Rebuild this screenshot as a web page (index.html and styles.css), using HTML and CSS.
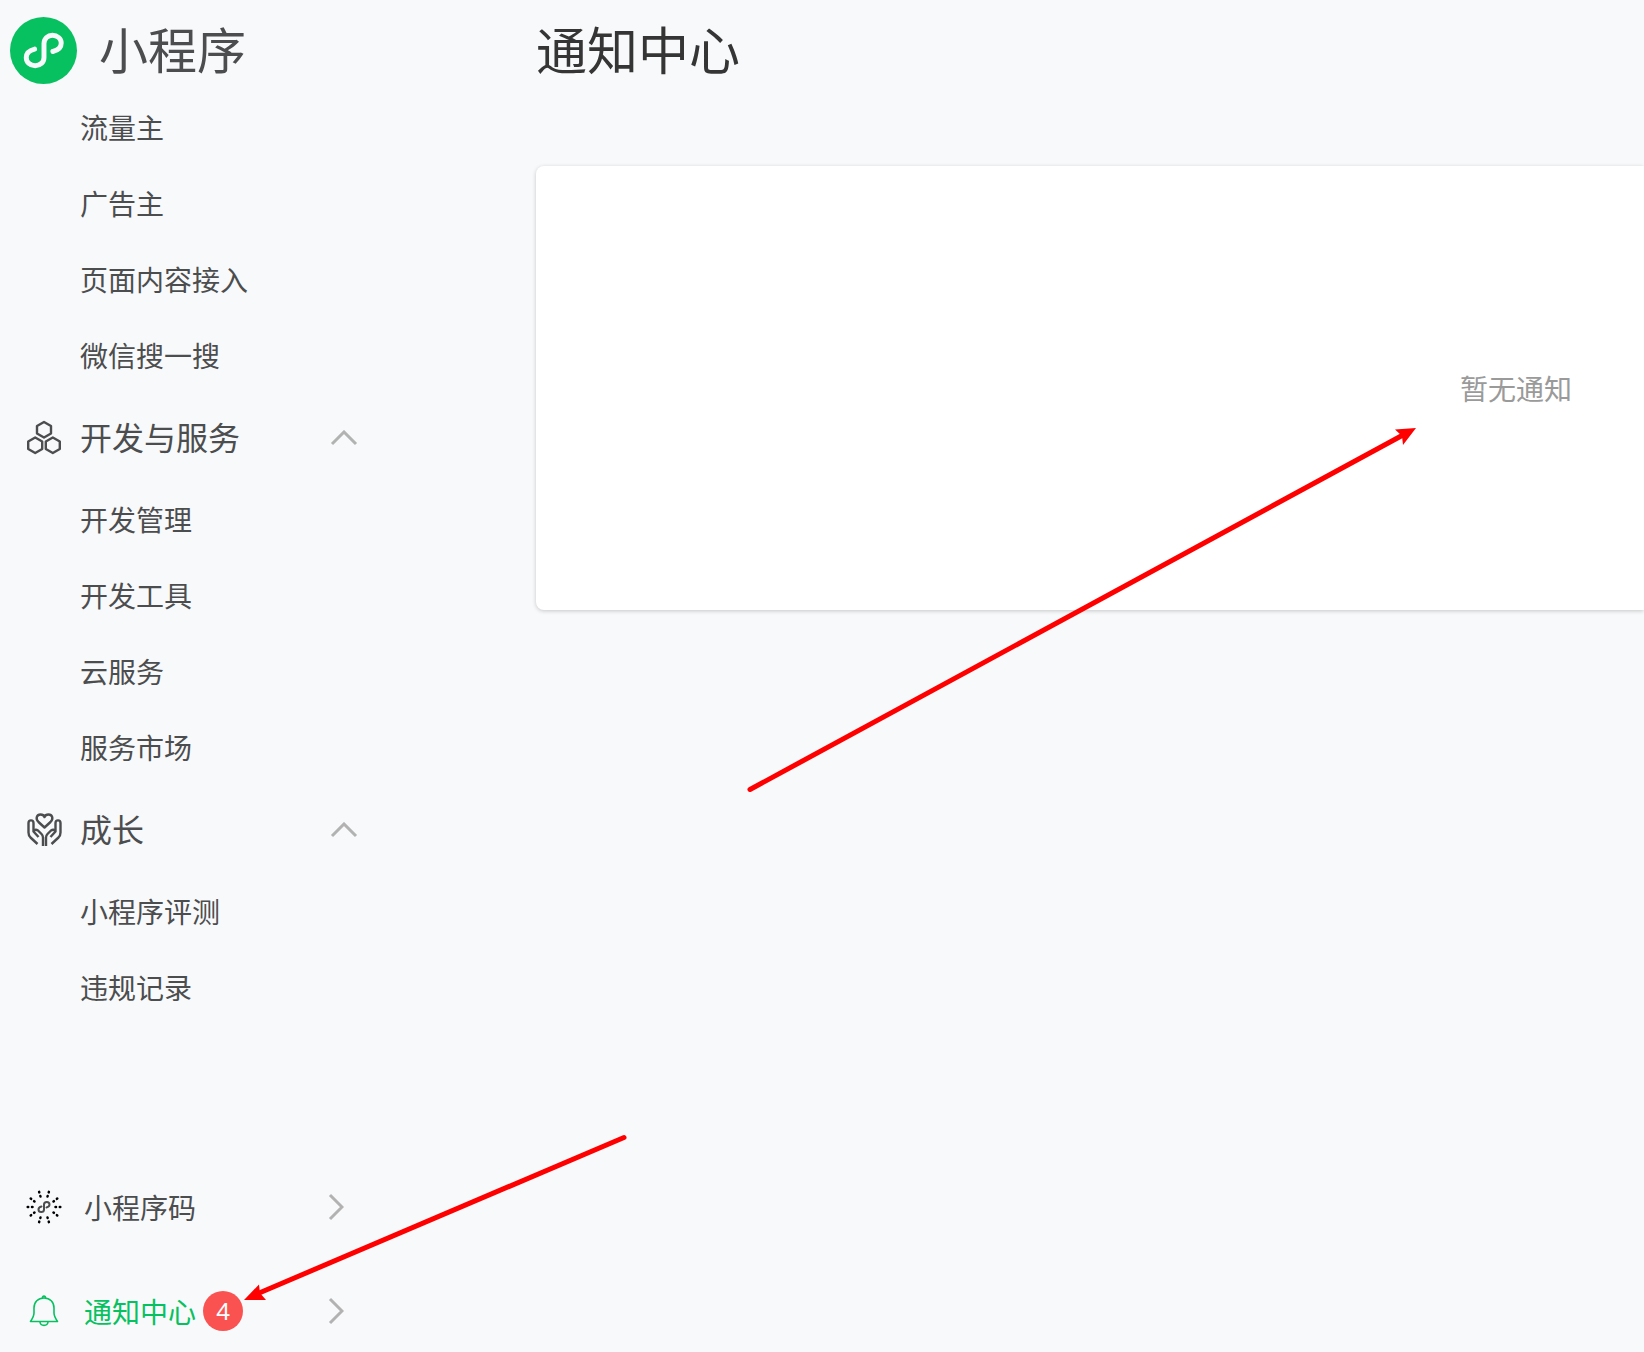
FILE: index.html
```html
<!DOCTYPE html>
<html lang="zh-CN">
<head>
    <meta charset="utf-8">
    <title>小程序 - 通知中心</title>
    <link rel="stylesheet" href="styles.css">
</head>
<body>
    <div class="layout">
        <aside class="sidebar">
            <a class="brand" href="#">
                <svg class="brand-logo" viewBox="0 0 68 68" aria-hidden="true">
                    <circle cx="34" cy="34" r="34" fill="#07c160"/>
                    <path d="M25 32.500C19 34 16.500 37 16.500 41C16.500 46 20.500 49.500 25.500 49.500C30.500 49.500 34.500 46 34.500 41V27C34.500 22 38.500 18.500 43 18.500C48 18.500 52 22 52 26.500C52 31 48.500 34 43.500 35" fill="none" stroke="#f8f9fb" stroke-width="5" stroke-linecap="round"/>
                </svg>
                <span class="brand-name">小程序</span>
            </a>

            <nav class="menu">
                <ul class="menu-list">
                    <li><a class="menu-item" href="#">流量主</a></li>
                    <li><a class="menu-item" href="#">广告主</a></li>
                    <li><a class="menu-item" href="#">页面内容接入</a></li>
                    <li><a class="menu-item" href="#">微信搜一搜</a></li>
                </ul>

                <button class="menu-group" type="button" aria-expanded="true">
                    <svg class="menu-icon" viewBox="0 0 36 36" aria-hidden="true">
                        <g fill="none" stroke="#4c4d4e" stroke-width="2.4" stroke-linejoin="round">
                            <path d="M18 2L25 6V13.500L18 17.500L11 13.500V6Z"/>
                            <path d="M9.200 17.500L16.200 21.500V29L9.200 33L2.200 29V21.500Z"/>
                            <path d="M26.800 17.500L33.800 21.500V29L26.800 33L19.800 29V21.500Z"/>
                        </g>
                    </svg>
                    <span class="menu-group-name">开发与服务</span>
                    <svg class="arrow-up" viewBox="0 0 28 16" aria-hidden="true"><path d="M2 14L14 2L26 14"/></svg>
                </button>
                <ul class="menu-list">
                    <li><a class="menu-item" href="#">开发管理</a></li>
                    <li><a class="menu-item" href="#">开发工具</a></li>
                    <li><a class="menu-item" href="#">云服务</a></li>
                    <li><a class="menu-item" href="#">服务市场</a></li>
                </ul>

                <button class="menu-group" type="button" aria-expanded="true">
                    <svg class="menu-icon" viewBox="0 0 36 36" aria-hidden="true">
                        <g fill="none" stroke="#4c4d4e" stroke-width="2.400" stroke-linejoin="round">
                            <path d="M18.500 15.500L12.500 10C9 6.500 11 2.500 14.500 2.500C16.500 2.500 18 3.500 18.500 5C19 3.500 20.500 2.500 22.500 2.500C26 2.500 28 6.500 24.500 10Z"/>
                            <path d="M11.500 32L4.500 25.500C3 24 2.500 22.500 2.500 20.500V11C2.500 7.500 7.500 7.500 7.500 11V19.500L12.500 25M7.500 20C8.500 17 10.500 17.500 12 18.500L15.500 22C16.500 23 17 24 17 25.500V34"/>
                            <path d="M25.500 32L32.500 25.500C34 24 34.500 22.500 34.500 20.500V11C34.500 7.500 29.500 7.500 29.500 11V19.500L24.500 25M29.500 20C28.500 17 26.500 17.500 25 18.500L21.500 22C20.500 23 20 24 20 25.500V34"/>
                        </g>
                    </svg>
                    <span class="menu-group-name">成长</span>
                    <svg class="arrow-up" viewBox="0 0 28 16" aria-hidden="true"><path d="M2 14L14 2L26 14"/></svg>
                </button>
                <ul class="menu-list">
                    <li><a class="menu-item" href="#">小程序评测</a></li>
                    <li><a class="menu-item" href="#">违规记录</a></li>
                </ul>
            </nav>

            <div class="sidebar-footer">
                <a class="footer-item" href="#">
                    <svg class="menu-icon" viewBox="0 0 36 36" aria-hidden="true">
                        <g fill="none" stroke="#000" stroke-width="2.500" stroke-linecap="round" stroke-dasharray="0.5 3.800">
                            <path d="M29.500 18H34.500M6.500 18H1.500M27.500 12.500L32 9M8.500 12.500L4 9M27.500 23.500L32 27M8.500 23.500L4 27"/>
                            <path d="M21.500 7.500L23 2.500M14.500 7.500L13 2.500M21.500 28.500L23 33.500M14.500 28.500L13 33.500"/>
                        </g>
                        <path d="M15.500 17.500C13.500 18 12.500 19.200 12.500 20.500C12.500 22 13.700 23 15.200 23C16.800 23 18 22 18 20.500V15.500C18 14 19.200 13 20.800 13C22.300 13 23.500 14 23.500 15.500C23.500 16.800 22.500 18 20.500 18.500" fill="none" stroke="#4c4d4e" stroke-width="2" stroke-linecap="round"/>
                    </svg>
                    <span>小程序码</span>
                    <svg class="arrow-right" viewBox="0 0 16 28" aria-hidden="true"><path d="M2 2L14 14L2 26"/></svg>
                </a>
                <a class="footer-item active" href="#">
                    <svg class="menu-icon" viewBox="0 0 36 36" aria-hidden="true">
                        <g fill="none" stroke="#07c160" stroke-width="1.600" stroke-linejoin="round">
                            <path d="M4.500 28.500C6.500 25.500 8 23 8 20V15C8 9 12 5 18 5C24 5 28 9 28 15V20C28 23 29.500 25.500 31.500 28.500Z"/>
                            <path d="M14 29C14.500 33.500 21.500 33.500 22 29"/>
                            <path d="M16.500 5C16.500 2.500 19.500 2.500 19.500 5"/>
                        </g>
                    </svg>
                    <span>通知中心</span>
                    <span class="badge">4</span>
                    <svg class="arrow-right" viewBox="0 0 16 28" aria-hidden="true"><path d="M2 2L14 14L2 26"/></svg>
                </a>
            </div>
        </aside>

        <main class="content">
            <h1 class="title">通知中心</h1>
            <section class="card">
                <p class="empty">暂无通知</p>
            </section>
        </main>
    </div>

    <svg class="annotations" aria-hidden="true">
        <g stroke="#ff0000" stroke-width="5" stroke-linecap="round">
            <path d="M750 789.500L1403 435"/>
            <path d="M624 1137.500L258 1293.500"/>
        </g>
        <g fill="#ff0000">
            <path d="M1416 428L1403 445L1402 436L1395 429.500Z"/>
            <path d="M244 1300L259 1284.500L260 1293L266 1300Z"/>
        </g>
    </svg>
</body>
</html>
```
FILE: styles.css
```css
* {
    box-sizing: border-box;
}
body {
    margin: 0;
    background: #f8f9fb;
    color: #4c4d4e;
    font-family: "Noto Sans CJK SC", sans-serif;
    font-size: 28px;
    line-height: 40px;
}
a {
    color: inherit;
    text-decoration: none;
}
.layout {
    display: flex;
    min-height: 100vh;
}

/* sidebar */
.sidebar {
    display: flex;
    flex-direction: column;
    flex: none;
    width: 536px;
}
.brand {
    display: flex;
    align-items: center;
    gap: 22px;
    height: 90px;
    padding: 10px 10px 0;
}
.brand-logo {
    width: 67px;
    height: 67px;
}
.brand-name {
    padding-bottom: 4px;
    font-size: 49px;
}
.menu {
    width: 358px;
}
.menu-list {
    margin: 0;
    padding: 0;
    list-style: none;
}
.menu-item {
    display: flex;
    align-items: center;
    height: 76px;
    padding: 0 0 2px 80px;
}
.menu-group {
    display: flex;
    align-items: center;
    gap: 18px;
    width: 100%;
    height: 88px;
    padding: 0 0 0 26px;
    border: none;
    background: none;
    color: inherit;
    font-family: inherit;
    font-size: 32px;
    line-height: 40px;
    cursor: pointer;
}
.menu-group-name {
    padding-bottom: 4px;
}
.menu-icon {
    flex: none;
    width: 36px;
    height: 36px;
}
.arrow-up,
.arrow-right {
    flex: none;
    margin-left: auto;
    fill: none;
    stroke: #b2b2b2;
    stroke-width: 3;
}
.arrow-up {
    width: 28px;
    height: 16px;
}
.arrow-right {
    width: 16px;
    height: 28px;
}
.sidebar-footer {
    display: flex;
    flex-direction: column;
    gap: 24px;
    width: 344px;
    margin-top: auto;
}
.footer-item {
    display: flex;
    align-items: center;
    height: 80px;
    padding: 0 0 2px 26px;
}
.footer-item .menu-icon {
    margin-right: 22px;
}
.footer-item.active {
    color: #07c160;
}
.badge {
    width: 40px;
    height: 40px;
    margin-left: 7px;
    border-radius: 50%;
    background: #fa5151;
    color: #fff;
    font-family: "Noto Sans", sans-serif;
    font-size: 24px;
    text-align: center;
}

/* content */
.content {
    flex: 1;
    min-width: 0;
}
.title {
    margin: 12px 0 82px;
    color: #353535;
    font-size: 51px;
    font-weight: 400;
    line-height: 72px;
}
.card {
    display: flex;
    justify-content: flex-end;
    padding: 202px 72px 202px 0;
    border-radius: 8px 0 0 8px;
    background: #fff;
    box-shadow: 0 1px 4px rgba(0, 0, 0, 0.2);
}
.empty {
    margin: 0;
    color: #9a9a9a;
}

/* arrows drawn over the page */
.annotations {
    position: absolute;
    top: 0;
    left: 0;
    width: 100%;
    height: 100%;
    pointer-events: none;
}
```
